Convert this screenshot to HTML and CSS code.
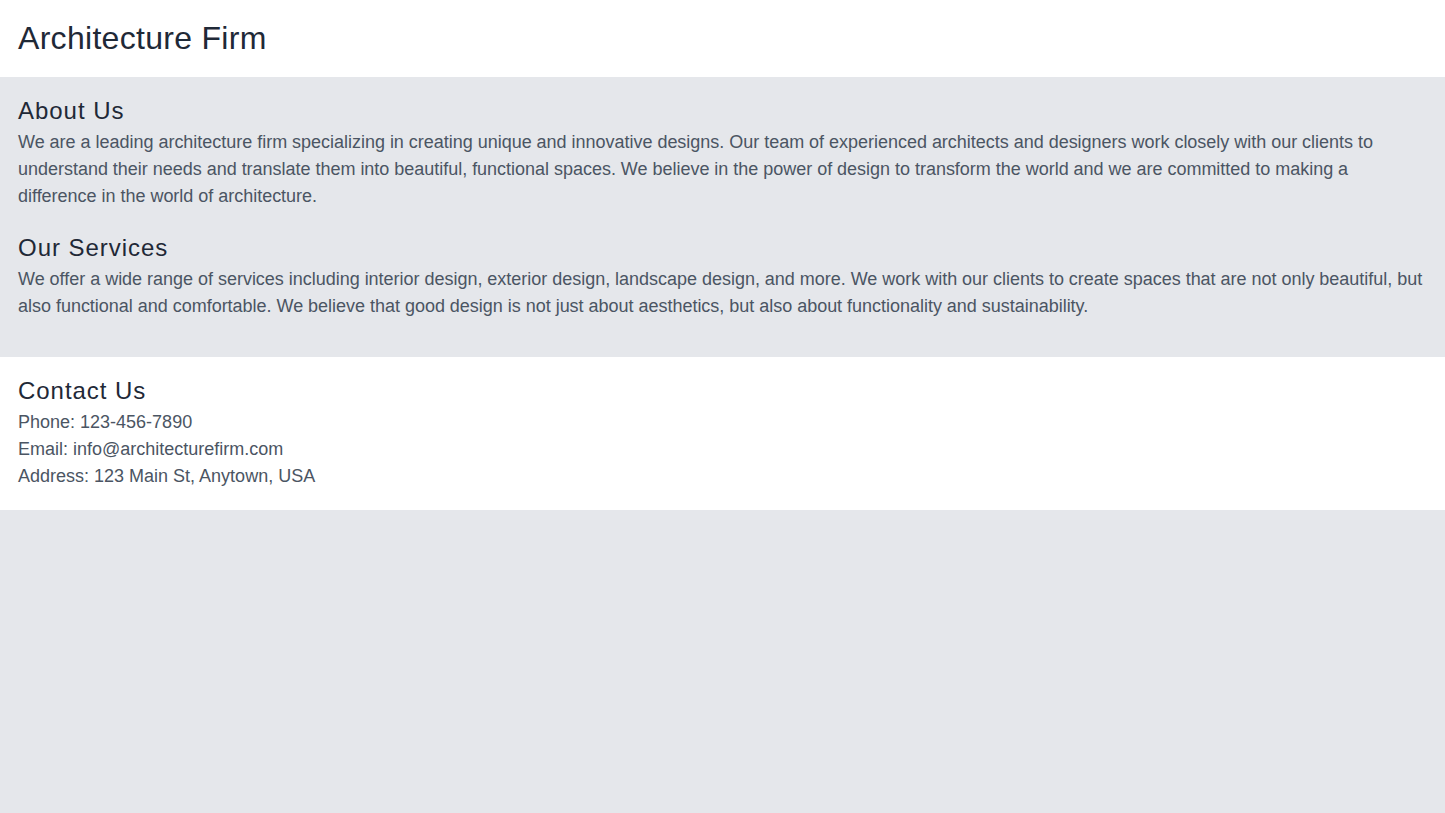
FILE: index.html
```html
<!DOCTYPE html>
<html>
<head lang="en">
    <meta charset="UTF-8">
    <title>Architecture Firm</title>
    <link rel="stylesheet" href="styles.css">
</head>
<body>
<header class="top">
    <h1 class="title">Architecture Firm</h1>
</header>
<main class="main">
    <section class="block">
        <h2 class="block-title">About Us</h2>
        <p class="block-text">We are a leading architecture firm specializing in creating unique and innovative designs. Our team of experienced architects and designers work closely with our clients to understand their needs and translate them into beautiful, functional spaces. We believe in the power of design to transform the world and we are committed to making a difference in the world of architecture.</p>
    </section>
    <section class="block">
        <h2 class="block-title">Our Services</h2>
        <p class="block-text">We offer a wide range of services including interior design, exterior design, landscape design, and more. We work with our clients to create spaces that are not only beautiful, but also functional and comfortable. We believe that good design is not just about aesthetics, but also about functionality and sustainability.</p>
    </section>
</main>
<footer class="contact">
    <h2 class="block-title">Contact Us</h2>
    <p class="block-text">Phone: 123-456-7890</p>
    <p class="block-text">Email: info@architecturefirm.com</p>
    <p class="block-text">Address: 123 Main St, Anytown, USA</p>
</footer>
</body>
</html>
```
FILE: styles.css
```css
html {
    line-height: 1.5;
}

body {
    margin: 0;
    min-height: 100vh;
    background: #e5e7eb;
    font-family: "Liberation Sans", Arial, sans-serif;
    color: #1f2937;
}

h1, h2, p {
    margin: 0;
    font-weight: 400;
}

.top {
    background: #fff;
    padding: 16px 18px;
}

.title {
    font-size: 32px;
    line-height: 45px;
    letter-spacing: 0.3px;
}

.main {
    padding: 16px 18px 37px;
}

.block {
    margin-bottom: 20px;
}

.block:last-child {
    margin-bottom: 0;
}

.block-title {
    font-size: 24px;
    letter-spacing: 0.04em;
    color: #1f2937;
}

.block-text {
    font-size: 18px;
    letter-spacing: -0.02px;
    color: #4b5563;
}

.contact .block-text {
    letter-spacing: 0;
}

.contact {
    background: #fff;
    padding: 16px 18px 20px;
}
```
